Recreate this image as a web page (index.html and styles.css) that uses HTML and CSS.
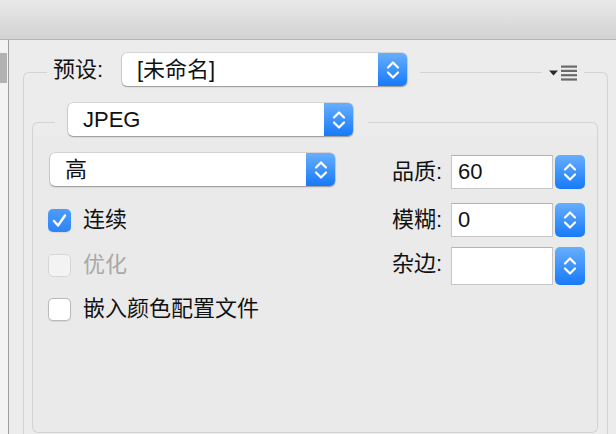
FILE: index.html
```html
<!DOCTYPE html>
<html lang="zh">
<head>
<meta charset="utf-8">
<title>存储为 Web 所用格式</title>
<link rel="stylesheet" href="styles.css">
</head>
<body>
<div class="toolbar"></div>
<div class="main">
  <div class="sidebar"><div class="thumb"></div></div>
  <div class="panel">
    <div class="group-head">
      <span class="corner corner-l"></span>
      <span class="head-label">预设:</span>
      <div class="popup popup-wide">
        <span class="popup-text">[未命名]</span>
        <span class="popup-arrows"><svg width="14" height="22" viewBox="0 0 14 22"><polyline points="2,8.5 7,3.5 12,8.5"/><polyline points="2,13.5 7,18.5 12,13.5"/></svg></span>
      </div>
      <span class="rule"></span>
      <svg class="menu-icon" width="28" height="33" viewBox="0 0 28 33">
        <polygon points="0,17.5 9,17.5 4.5,22.5" fill="#2a2a2a"/>
        <rect x="12" y="12.5" width="16" height="2.2" fill="#6a6a6a"/>
        <rect x="12" y="16.8" width="16" height="2.2" fill="#6a6a6a"/>
        <rect x="12" y="21.1" width="16" height="2.2" fill="#6a6a6a"/>
        <rect x="12" y="25.4" width="16" height="2.2" fill="#6a6a6a"/>
      </svg>
      <span class="corner corner-r"></span>
    </div>
    <div class="group-body">
      <div class="sub-head">
        <span class="corner sub-corner-l"></span>
        <div class="popup popup-wide">
          <span class="popup-text">JPEG</span>
          <span class="popup-arrows"><svg width="14" height="22" viewBox="0 0 14 22"><polyline points="2,8.5 7,3.5 12,8.5"/><polyline points="2,13.5 7,18.5 12,13.5"/></svg></span>
        </div>
        <span class="corner sub-rule"></span>
      </div>
      <div class="sub-body">
        <div class="col-left">
          <div class="popup popup-wide popup-quality">
            <span class="popup-text">高</span>
            <span class="popup-arrows"><svg width="14" height="22" viewBox="0 0 14 22"><polyline points="2,8.5 7,3.5 12,8.5"/><polyline points="2,13.5 7,18.5 12,13.5"/></svg></span>
          </div>
          <label class="check-row first">
            <span class="box checked"><svg width="23" height="23" viewBox="0 0 23 23"><polyline points="6,12 10,16.5 17,6.5"/></svg></span>
            <span class="check-label">连续</span>
          </label>
          <label class="check-row disabled">
            <span class="box"></span>
            <span class="check-label">优化</span>
          </label>
          <label class="check-row last">
            <span class="box"></span>
            <span class="check-label">嵌入颜色配置文件</span>
          </label>
        </div>
        <div class="col-right">
          <span class="field-label">品质:</span>
          <span class="field">60</span>
          <span class="stepper"><svg width="14" height="22" viewBox="0 0 14 22"><polyline points="2,8.5 7,3.5 12,8.5"/><polyline points="2,13.5 7,18.5 12,13.5"/></svg></span>

          <span class="field-label row2">模糊:</span>
          <span class="field row2">0</span>
          <span class="stepper row2"><svg width="14" height="22" viewBox="0 0 14 22"><polyline points="2,8.5 7,3.5 12,8.5"/><polyline points="2,13.5 7,18.5 12,13.5"/></svg></span>

          <span class="field-label row3">杂边:</span>
          <span class="field row3"></span>
          <span class="stepper row3"><svg width="14" height="22" viewBox="0 0 14 22"><polyline points="2,8.5 7,3.5 12,8.5"/><polyline points="2,13.5 7,18.5 12,13.5"/></svg></span>
        </div>
      </div>
    </div>
  </div>
</div>
</body>
</html>
```

FILE: styles.css
```css
html, body {
  margin: 0;
  height: 100%;
  overflow: hidden;
  background: #ececec;
  font-family: "Liberation Sans", "Noto Sans CJK SC", sans-serif;
  color: #111;
}

.toolbar {
  height: 39px;
  background: linear-gradient(#e9e9e9, #d2d2d2);
  border-bottom: 1px solid #b5b5b5;
}

.main {
  display: flex;
  height: 394px;
}

.sidebar {
  width: 8px;
  flex: none;
  background: #f3f3f3;
  border-right: 1px solid #9c9c9c;
  padding-top: 13px;
}

.thumb {
  width: 7px;
  height: 30px;
  background: #b2b2b2;
}

.panel {
  margin-left: 14px;
  width: 585px;
  flex: none;
  padding-top: 13px;
}

.group-head,
.sub-head {
  display: flex;
  align-items: flex-start;
  height: 33px;
}

.corner {
  box-sizing: border-box;
  margin-top: 19px;
  height: 14px;
  border-top: 1px solid #d3d3d3;
  flex: none;
}

.corner-l {
  width: 24px;
  border-left: 1px solid #d3d3d3;
  border-top-left-radius: 6px;
}

.corner-r {
  width: 24px;
  border-right: 1px solid #d3d3d3;
  border-top-right-radius: 6px;
}

.head-label {
  width: 69px;
  margin-left: 6px;
  flex: none;
  font-size: 22px;
  line-height: 33px;
  white-space: nowrap;
}

.rule {
  flex: 1;
  margin: 19px 7px 0 13px;
  border-top: 1px solid #d3d3d3;
}

.menu-icon {
  flex: none;
  display: block;
  margin-right: 7px;
}

.popup {
  display: flex;
  height: 33px;
  background: #fff;
  border-radius: 5px;
  box-shadow: 0 0 0 0.5px rgba(0, 0, 0, 0.18), 0 1px 1.5px rgba(0, 0, 0, 0.3);
  flex: none;
}

.popup-wide {
  width: 285px;
}

.popup-text {
  flex: 1;
  padding-left: 15px;
  font-size: 22px;
  line-height: 33px;
  white-space: nowrap;
}

.popup-arrows,
.stepper {
  width: 29px;
  flex: none;
  display: flex;
  align-items: center;
  justify-content: center;
  background: linear-gradient(#68aefd, #167af9);
  border-radius: 0 5px 5px 0;
}

.popup-arrows svg,
.stepper svg {
  fill: none;
  stroke: #fff;
  stroke-width: 2.2;
  stroke-linecap: round;
  stroke-linejoin: round;
}

.group-body {
  border: 1px solid #d3d3d3;
  border-top: none;
  border-bottom: none;
  padding: 17px 9px 1px 8px;
}

.sub-corner-l {
  width: 23px;
  margin-right: 13px;
  border-left: 1px solid #d3d3d3;
  border-top-left-radius: 6px;
}

.sub-rule {
  flex: 1;
  margin-left: 15px;
  border-right: 1px solid #d3d3d3;
  border-top-right-radius: 6px;
}

.sub-body {
  box-sizing: border-box;
  height: 297px;
  border: 1px solid #d3d3d3;
  border-top: none;
  border-radius: 0 0 6px 6px;
  background: #eaeaea;
  display: flex;
  justify-content: space-between;
  align-items: flex-start;
  padding: 17px 14px 0 15px;
}

.col-left {
  display: flex;
  flex-direction: column;
}

.popup-quality {
  margin-left: 2px;
}

.check-row {
  display: flex;
  align-items: center;
  height: 24px;
  margin-top: 21px;
}

.check-row.first {
  margin-top: 22px;
}

.check-row.last {
  margin-top: 20px;
}

.box {
  box-sizing: border-box;
  width: 23px;
  height: 23px;
  border-radius: 5px;
  background: #fff;
  border: 1px solid #b9b9b9;
  box-shadow: 0 0.5px 1px rgba(0, 0, 0, 0.08);
  flex: none;
}

.box.checked {
  border: none;
  background: linear-gradient(#4e9cfa, #2d84f6);
}

.box.checked svg {
  display: block;
  fill: none;
  stroke: #fff;
  stroke-width: 2.4;
  stroke-linecap: round;
  stroke-linejoin: round;
}

.disabled .box {
  background: #f3f3f3;
  border-color: #d6d6d6;
  box-shadow: none;
}

.check-label {
  margin-left: 12px;
  font-size: 22px;
  line-height: 24px;
  white-space: nowrap;
}

.disabled .check-label {
  color: #a9a9a9;
}

.col-right {
  margin-top: 2px;
  display: grid;
  grid-template-columns: auto 102px 30px;
  grid-template-rows: 34px 34px 34px;
  row-gap: 14px;
  align-items: stretch;
}

.col-right .row3 {
  margin-top: -4px;
}

.field-label {
  font-size: 22px;
  line-height: 34px;
  text-align: right;
  padding-right: 9px;
  white-space: nowrap;
}

.field {
  box-sizing: border-box;
  background: #fff;
  border: 1px solid #c6c6c6;
  border-top-color: #b4b4b4;
  font-size: 22px;
  line-height: 32px;
  padding-left: 6px;
}

.stepper {
  margin-left: 2px;
  width: 30px;
  border-radius: 5px;
  box-sizing: border-box;
}
```
